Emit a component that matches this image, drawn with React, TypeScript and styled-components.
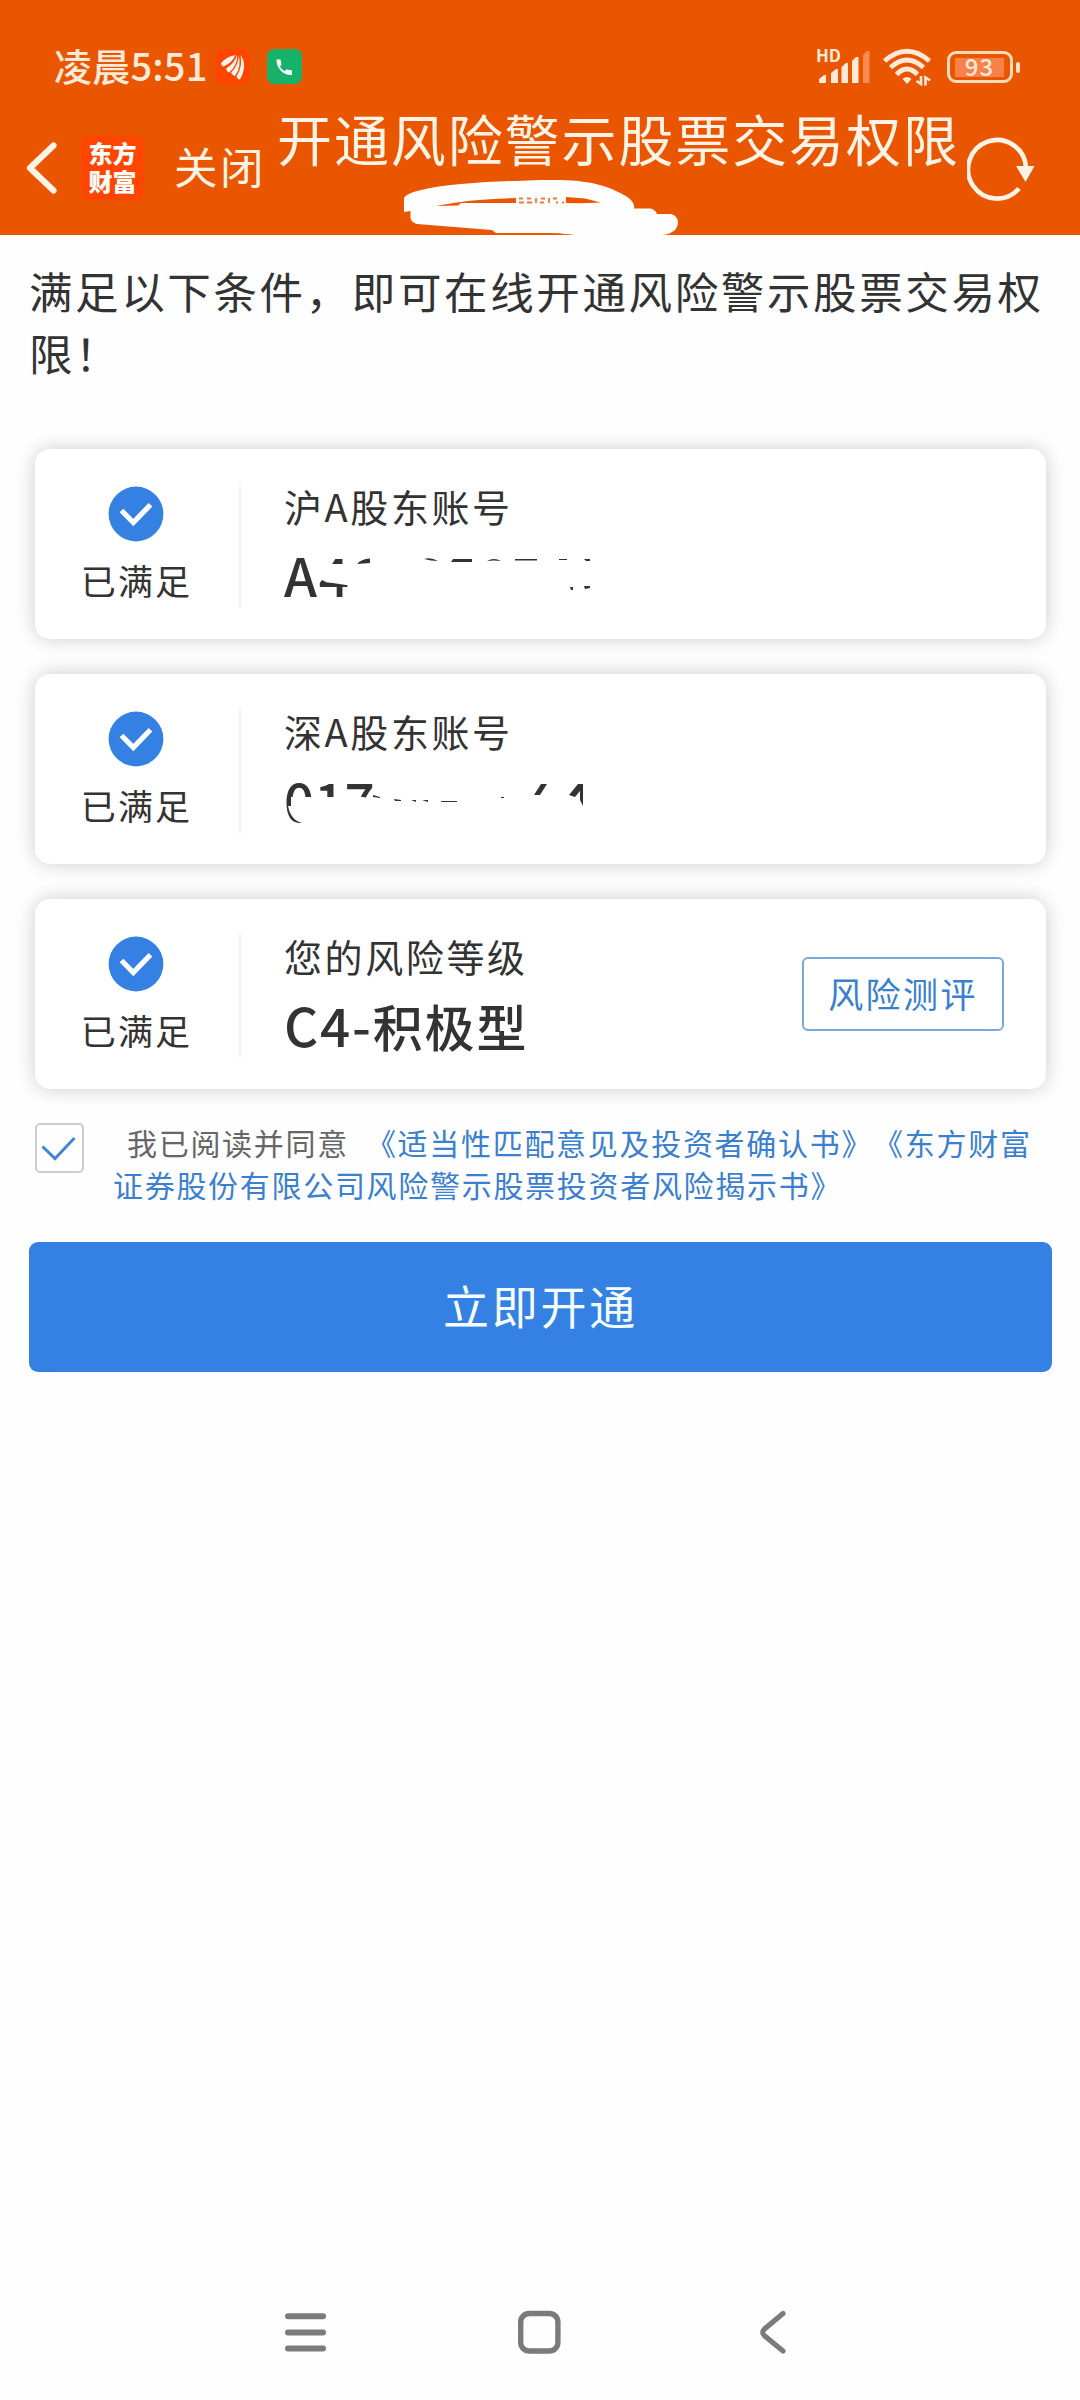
import React from "react";
import styled, { createGlobalStyle } from "styled-components";

const Global = createGlobalStyle`
  * { box-sizing: border-box; }
  body {
    margin: 0;
    background: #fefefe;
    font-family: "Noto Sans CJK SC", "Noto Sans", sans-serif;
    color: #333;
    text-spacing-trim: space-all;
  }
  svg { display: block; }
`;

const Screen = styled.div`
  width: 1080px;
  height: 2400px;
  display: flex;
  flex-direction: column;
  overflow: hidden;
`;

const Header = styled.header`
  position: relative;
  height: 235px;
  background: #ea5600;
  color: #fff3e6;
  flex: none;
`;

const StatusBar = styled.div`
  height: 104px;
  padding: 30px 67px 0 54px;
  display: flex;
  align-items: center;
  justify-content: space-between;
  color: #ffe9d8;
`;

const StatusGroup = styled.div`
  display: flex;
  align-items: center;
`;

const Clock = styled.div`
  width: 161px;
  font-size: 38px;
  font-weight: 500;
  line-height: 60px;
  white-space: nowrap;
  letter-spacing: 0.2px;
  margin-top: -5px;
`;

const StatusTile = styled.div<{ $bg: string; $gap: number }>`
  width: 35px;
  height: 35px;
  margin-top: -1px;
  border-radius: 7px;
  background: ${(p) => p.$bg};
  margin-right: ${(p) => p.$gap}px;
`;

const Signal = styled.div`
  position: relative;
  width: 65px;
  height: 38px;
`;

const HdLabel = styled.span`
  position: absolute;
  left: -1px;
  top: 0;
  font: 700 17px/14px "Noto Sans CJK SC", sans-serif;
`;

const Battery = styled.div`
  position: relative;
  width: 66px;
  height: 32px;
  margin-left: 15px;
  padding: 4px 10px 4px 5px;
  border: 3px solid #ffdcb8;
  border-radius: 9px;
  &::after {
    content: "";
    position: absolute;
    right: -10px;
    top: 8px;
    width: 4.5px;
    height: 11px;
    border-radius: 2px;
    background: #ffe0c4;
  }
`;

const BatteryFill = styled.div`
  width: 49px;
  height: 19px;
  background: #f6824a;
  font-size: 24px;
  font-weight: 500;
  line-height: 16px;
  text-align: center;
  letter-spacing: 1px;
`;

const TitleBar = styled.div`
  display: flex;
  align-items: flex-start;
  height: 131px;
  padding: 0 43px 0 26px;
`;

const BackIcon = styled.div`
  width: 55px;
  padding-top: 38px;
`;

const Logo = styled.div`
  width: 63px;
  height: 64px;
  margin-top: 32px;
  padding-top: 5px;
  border-radius: 8px;
  background: #ff4500;
  color: #fff;
  font-family: "Liberation Sans", "Noto Sans CJK SC", sans-serif;
  font-size: 24px;
  font-weight: 900;
  line-height: 28px;
  text-align: center;
`;

const LogoLine = styled.div`
  height: 28px;
`;

const Close = styled.div`
  width: 103px;
  margin: 29px 0 0 30px;
  font-size: 43.5px;
  line-height: 66px;
  letter-spacing: 2.6px;
  white-space: nowrap;
`;

const Title = styled.h1`
  width: 690px;
  margin: 0;
  font-size: 55px;
  font-weight: 400;
  line-height: 66px;
  letter-spacing: 1.9px;
  white-space: nowrap;
`;

const RefreshIcon = styled.div`
  padding-top: 31px;
`;

const Scribble = styled.svg`
  position: absolute;
  left: 400px;
  top: 176px;
`;

const Intro = styled.p`
  margin: 0;
  padding: 25px 0 0 29px;
  height: 214px;
  font-size: 43.5px;
  line-height: 62px;
  letter-spacing: 2.62px;
  white-space: nowrap;
`;

const CardList = styled.div`
  display: flex;
  flex-direction: column;
  gap: 35px;
  padding: 0 34px 0 35px;
`;

const Card = styled.section`
  height: 190px;
  display: flex;
  align-items: center;
  padding-right: 42px;
  border-radius: 15px;
  background: #fff;
  box-shadow: 0 0 20px rgba(0, 0, 0, 0.2);
`;

const State = styled.div`
  width: 206px;
  height: 126px;
  margin-top: 2px;
  padding: 4px 3px 0 0;
  border-right: 2px solid #f5f5f5;
  display: flex;
  flex-direction: column;
  align-items: center;
`;

const StateLabel = styled.div`
  margin-top: 10px;
  font-size: 35px;
  line-height: 56px;
  letter-spacing: 2.2px;
  padding-left: 2px;
`;

const Info = styled.div`
  flex: 1;
  height: 190px;
  padding: 30px 0 0 43px;
`;

const InfoLabel = styled.div`
  font-size: 38px;
  line-height: 54px;
  letter-spacing: 2.6px;
`;

const InfoValue = styled.div`
  position: relative;
  margin-top: 9px;
  height: 66px;
  font-size: 50px;
  font-weight: 500;
  line-height: 65px;
  letter-spacing: 1.8px;
  white-space: nowrap;
`;

const Latin = styled.span<{ $tight?: boolean }>`
  font-size: 53px;
  letter-spacing: ${(p) => (p.$tight ? 0 : 1.8)}px;
`;

const Smudge = styled.svg`
  position: absolute;
  left: -6px;
  top: 0;
`;

const TestButton = styled.button`
  width: 202px;
  height: 74px;
  padding: 0 0 4px;
  border: 2px solid #78a9d8;
  border-radius: 6px;
  background: #fff;
  color: #3a7fd0;
  font-family: inherit;
  font-size: 35px;
  letter-spacing: 2.4px;
`;

const Agreement = styled.div`
  display: flex;
  height: 153px;
  padding: 34px 0 0 35px;
`;

const CheckBox = styled.div`
  width: 49px;
  height: 50px;
  border: 2.5px solid #cdcdcd;
  border-radius: 5px;
`;

const AgreeText = styled.p`
  margin: -2px 0 0 29px;
  font-size: 30px;
  line-height: 42px;
  letter-spacing: 1.7px;
  text-indent: 14px;
  color: #666;
  white-space: nowrap;
`;

const Link = styled.a<{ $gap?: number }>`
  margin-left: ${(p) => p.$gap ?? 0}px;
  color: #3a7fd0;
`;

const Submit = styled.button`
  width: 1023px;
  height: 130px;
  margin-left: 29px;
  padding: 0 0 6px;
  border: 0;
  border-radius: 9px;
  background: #3480e3;
  color: #f4fdff;
  font-family: inherit;
  font-size: 46px;
  letter-spacing: 2.8px;
  flex: none;
`;

const NavBar = styled.nav`
  margin-top: auto;
  height: 92px;
  display: flex;
  align-items: flex-start;
  padding-left: 285px;
`;

const NavItem = styled.div<{ $w: number }>`
  width: ${(p) => p.$w}px;
`;

const Met = () => (
  <State>
    <svg width="56" height="56" viewBox="0 0 56 56">
      <circle cx="28" cy="28" r="27.4" fill="#3480e3" />
      <path d="M13.5 24.5 25.3 36.6 42.5 18.7" fill="none" stroke="#fff" strokeWidth="5.2" />
    </svg>
    <StateLabel>已满足</StateLabel>
  </State>
);

export default function App() {
  return (
    <Screen>
      <Global />
      <Header>
        <StatusBar>
          <StatusGroup>
            <Clock>凌晨5:51</Clock>
            <StatusTile $bg="#ff4500" $gap={17}>
              <svg width="35" height="35" viewBox="0 0 35 35" fill="#fff3ea">
                <path d="M6 14Q11 8 20.500 6Q17 14 8.500 17.500Q6 17 6 14Z" />
                <path d="M22 6Q23 16 14 23.500Q11 22 11.500 19Q19 15 22 6Z" />
                <path d="M23.500 6Q27 17 20 27Q17 26 16 23.500Q24 16 23.500 6Z" />
                <path d="M25.500 6Q33 16 25 30.500Q22 30 21.500 27.500Q28 17 25.500 6Z" />
              </svg>
            </StatusTile>
            <StatusTile $bg="#17b26a" $gap={0}>
              <svg width="35" height="35" viewBox="0 0 35 35">
                <path d="M9.500 10.500H13.500L14.500 16 12.800 17.500Q14.500 20.500 17.500 22L19.500 20.500 25 21.500V26Q19 26.500 14 22Q9.500 17 9.500 10.500Z" fill="#fff" />
              </svg>
            </StatusTile>
          </StatusGroup>
          <StatusGroup>
            <Signal>
              <HdLabel>HD</HdLabel>
              <svg width="60" height="38" viewBox="0 0 60 38" fill="#ffe9d8">
                <path d="M2 35V31L7 27H9V35Z" />
                <path d="M14 35V25L19 21H21V35Z" />
                <path d="M24.500 35V19L29 15H31V35Z" />
                <path d="M35 35V13L39 9H41.500V35Z" />
                <path d="M46 35V7L50 3H52.500V35Z" fill="#f98a50" />
              </svg>
            </Signal>
            <svg width="50" height="38" viewBox="0 0 50 38" fill="none" stroke="#ffe9d8" strokeWidth="4.8">
              <path d="M2.500 13Q25 -6.500 47.500 13" />
              <path d="M8.500 19.500Q25 4.500 41.500 19.500" />
              <path d="M14.500 26.500Q25 15.500 35.500 26.500" />
              <path d="M20.500 31Q25 27 29.500 31L25 36Z" fill="#ffe9d8" stroke="none" />
              <path d="M39 28V36L34.500 33M43.500 37.500V29.500L48 32.500" strokeWidth="2.6" />
            </svg>
            <Battery>
              <BatteryFill>93</BatteryFill>
            </Battery>
          </StatusGroup>
        </StatusBar>
        <TitleBar>
          <BackIcon>
            <svg width="32" height="52" viewBox="0 0 32 52">
              <path d="M27.500 3.500 4 26 27.500 48.500" fill="none" stroke="#fff3e6" strokeWidth="6.2" strokeLinecap="round" strokeLinejoin="round" />
            </svg>
          </BackIcon>
          <Logo>
            <LogoLine>东方</LogoLine>
            <LogoLine>财富</LogoLine>
          </Logo>
          <Close>关闭</Close>
          <Title>开通风险警示股票交易权限</Title>
          <RefreshIcon>
            <svg width="70" height="66" viewBox="0 0 70 66">
              <path d="M59 32A29 29.300 0 1 0 52 53.500" fill="none" stroke="#fff3e6" strokeWidth="4.6" />
              <path d="M49 31H67.500L58.500 47Z" fill="#fff3e6" />
            </svg>
          </RefreshIcon>
        </TitleBar>
        <Scribble width="290" height="64" viewBox="400 176 290 64">
          <path
            fill="#fefefe"
            d="M404 212V198Q406 194 417 191Q435 186 461 184Q490 181 516 181L540 180H561Q576 180 592 183Q606 186 616 191Q627 196 631 200Q635 204 634 208.500H650Q655 209 657 214H671Q678 216 678 223Q677 230 672 232Q668 235 661 235V240H540V235H574Q560 233 540 233H496L492 230L417 224Q411 222 410.500 218V211Z"
          />
          <path fill="#ea5600" d="M435.600 206Q470 199 516 198V203H461L458 205.500Z" />
          <path fill="#ea5600" d="M566 197 585 198.500 601 202.500Q584 203.500 566 203Z" />
          <path
            stroke="#ea7a35"
            strokeWidth="1.8"
            fill="none"
            d="M519 202.500H524M527 202.500H532M519 198.500H523M527 198.500H531M536 198V203M541 198.500H545M540 202.500H544M549 198V203M553 198.500H557M556 202.500H558M562 202.500H564"
          />
          <path fill="#ea5600" d="M520 235Q545 231 574 235Z" />
        </Scribble>
      </Header>

      <Intro>
        满足以下条件，即可在线开通风险警示股票交易权
        <br />
        限！
      </Intro>

      <CardList>
        <Card>
          <Met />
          <Info>
            <InfoLabel>沪A股东账号</InfoLabel>
            <InfoValue>
              <Latin>A4</Latin>
              <Smudge width="330" height="66" viewBox="278 542 330 66">
                <path fill="#fff" d="M319 552H333L331 564H350V585H346L326 582 322 580 318 584V566Z" />
                <path
                  fill="#333"
                  d="M357 564Q361 559 370 558.500V563ZM424 559Q431 557 438 561Q431 561 424 559ZM453 559H472V562H451ZM487 561Q494 557 501 561Q494 560 487 561ZM515 559H537V560.500H515ZM559 559H567V560H559ZM584 559H590V561H586ZM570 587H573V590H571ZM584 586H590V588L585 589Z"
                />
              </Smudge>
            </InfoValue>
          </Info>
        </Card>
        <Card>
          <Met />
          <Info>
            <InfoLabel>深A股东账号</InfoLabel>
            <InfoValue>
              <Latin $tight>017</Latin>
              <Smudge width="330" height="66" viewBox="278 767 330 66">
                <path fill="#fff" d="M291 806V797H350L358 796L378 800V832H303V823Q291 821 288 806Z" />
                <path
                  fill="#333"
                  d="M373 795 380 797V798L373 797ZM394 799 401 800V801H395ZM411 800H416V802ZM422 800H428V802ZM441 801H457V802H441ZM501 797H504V798H501ZM534 795 541 784H547L540 795ZM569 795 578 784H583V806L580 800V791L575 797Z"
                />
              </Smudge>
            </InfoValue>
          </Info>
        </Card>
        <Card>
          <Met />
          <Info>
            <InfoLabel>您的风险等级</InfoLabel>
            <InfoValue>
              <Latin>C4-</Latin>积极型
            </InfoValue>
          </Info>
          <TestButton>风险测评</TestButton>
        </Card>
      </CardList>

      <Agreement>
        <CheckBox>
          <svg width="44" height="45" viewBox="0 0 44 45">
            <path d="M5.500 21.500 18 33.500 37.500 13" fill="none" stroke="#4285d8" strokeWidth="3" />
          </svg>
        </CheckBox>
        <AgreeText>
          我已阅读并同意
          <Link $gap={17}>《适当性匹配意见及投资者确认书》《东方财富</Link>
          <br />
          <Link>证券股份有限公司风险警示股票投资者风险揭示书》</Link>
        </AgreeText>
      </Agreement>

      <Submit>立即开通</Submit>

      <NavBar>
        <NavItem $w={233}>
          <svg width="41" height="50" viewBox="0 0 41 50" stroke="#7b7b7b" strokeWidth="6" strokeLinecap="round">
            <path d="M3 8.300H38M3 24.400H38M3 40.500H38" />
          </svg>
        </NavItem>
        <NavItem $w={241}>
          <svg width="43" height="50" viewBox="0 0 43 50">
            <rect x="2.700" y="5.500" width="37.200" height="37.500" rx="8.500" fill="none" stroke="#7b7b7b" strokeWidth="5.400" />
          </svg>
        </NavItem>
        <NavItem $w={30}>
          <svg width="30" height="50" viewBox="0 0 30 50">
            <path d="M24 5.500 5.500 21Q2 24.400 5.500 27.700L24 43" fill="none" stroke="#7b7b7b" strokeWidth="5.200" strokeLinecap="round" />
          </svg>
        </NavItem>
      </NavBar>
    </Screen>
  );
}
